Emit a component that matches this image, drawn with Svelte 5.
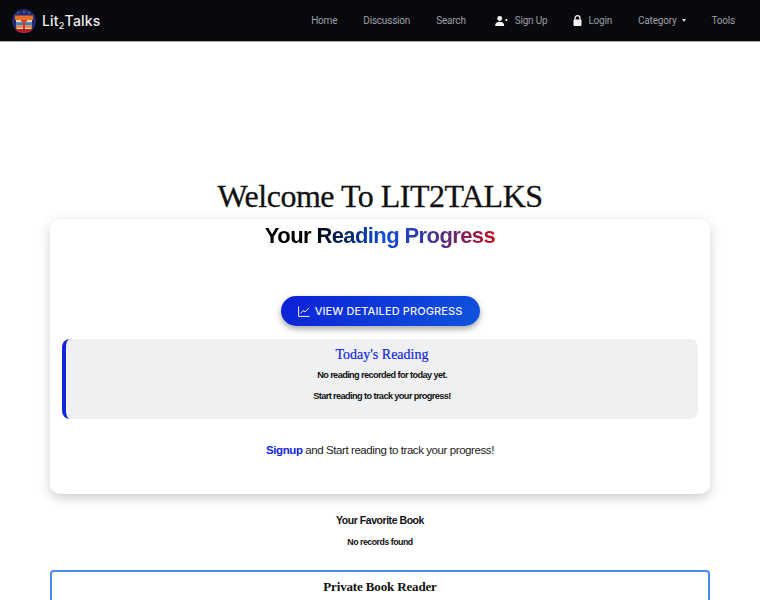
<script>
	const links = [
		{ label: 'Home' },
		{ label: 'Discussion' },
		{ label: 'Search' },
		{ label: 'Sign Up', icon: 'user' },
		{ label: 'Login', icon: 'lock' },
		{ label: 'Category', caret: true },
		{ label: 'Tools' }
	];
</script>

<nav class="navbar">
	<a class="brand" href="#top">
		<svg class="logo" viewBox="0 0 24 24" aria-hidden="true">
			<defs>
				<clipPath id="logo-clip"><circle cx="12" cy="12" r="12" /></clipPath>
			</defs>
			<g clip-path="url(#logo-clip)">
				<rect width="24" height="24" fill="#25296e" />
				<rect y="20" width="24" height="4" fill="#b3202a" />
				<circle cx="6" cy="4" r="0.8" fill="#7f8ac8" />
				<circle cx="12" cy="3" r="0.8" fill="#8f98d0" />
				<circle cx="17" cy="4" r="0.8" fill="#7f8ac8" />
				<rect x="3" y="6.500" width="18" height="4.500" fill="#e8702a" />
				<rect x="4" y="11" width="16" height="2.500" fill="#f6d8a8" />
				<rect x="4" y="13.500" width="16" height="2.500" fill="#3f7fd0" />
				<rect x="4" y="16" width="16" height="2.500" fill="#ee8a3c" />
				<rect x="4.500" y="18.500" width="15" height="1.500" fill="#f6d8a8" />
				<rect x="9" y="11" width="6" height="1.600" fill="#d8301f" />
				<rect x="11" y="11" width="2" height="9" fill="#d8301f" />
			</g>
		</svg>
		<span>Lit<sub>2</sub>Talks</span>
	</a>
	<ul class="nav-links">
		{#each links as link}
			<li>
				<a href="#top">
					{#if link.icon === 'user'}
						<svg class="icon user" viewBox="0 0 14 11" aria-hidden="true">
							<circle cx="5" cy="2.8" r="2.7" />
							<path d="M0 11c0-3.2 2-4.6 5-4.6s5 1.400 5 4.600z" />
							<circle cx="12.300" cy="4.500" r="1.200" />
						</svg>
					{:else if link.icon === 'lock'}
						<svg class="icon lock" viewBox="0 0 9 11" aria-hidden="true">
							<path d="M2 5V3.200a2.500 2.500 0 0 1 5 0V5" fill="none" stroke="currentColor" stroke-width="1.300" />
							<rect x="0.500" y="4.600" width="8" height="6.400" rx="1" />
						</svg>
					{/if}
					{link.label}
					{#if link.caret}<span class="caret"></span>{/if}
				</a>
			</li>
		{/each}
	</ul>
</nav>

<main class="page">
	<h1>Welcome To LIT2TALKS</h1>

	<section class="card">
		<h2 class="gradient-title">Your Reading Progress</h2>

		<a class="progress-btn" href="#top">
			<svg class="chart" viewBox="0 0 12 11" aria-hidden="true">
				<path d="M0.600 0.500V10.400H11.500" />
				<path d="M2.500 7.500L5 4.500L7 6L10.800 2" />
			</svg>
			View Detailed Progress
		</a>

		<div class="today">
			<h3>Today's Reading</h3>
			<p>No reading recorded for today yet.</p>
			<p>Start reading to track your progress!</p>
		</div>

		<p class="signup"><a href="#top">Signup</a> and Start reading to track your progress!</p>
	</section>

	<section class="favorite">
		<h4>Your Favorite Book</h4>
		<p>No records found</p>
	</section>

	<section class="reader">
		<h3>Private Book Reader</h3>
	</section>
</main>

<style>
	:global(html), :global(body) {
		height: 600px;
		overflow: hidden;
		background: #fff;
	}

	:global(body) {
		font-family: 'Liberation Sans', Arial, sans-serif;
		color: #111;
	}

	.navbar {
		height: 41px;
		background: #08090d;
		border-bottom: 1px solid #a9a9a9;
		display: flex;
		align-items: center;
		justify-content: space-between;
		padding: 0 12px;
	}

	.brand {
		display: flex;
		align-items: center;
		gap: 6px;
		color: #eeeeee;
		text-decoration: none;
		font-family: Inter, sans-serif;
		font-size: 14px;
		font-weight: 500;
		letter-spacing: 0.2px;
	}

	.brand sub {
		font-size: 9px;
		line-height: 0;
		vertical-align: -3px;
	}

	.logo {
		width: 24px;
		height: 24px;
	}

	.nav-links {
		list-style: none;
		display: flex;
		margin: 0;
		padding: 0 13px 0 0;
		gap: 26px;
	}

	.nav-links a {
		display: flex;
		align-items: center;
		color: #9c9fa3;
		text-decoration: none;
		font-family: Roboto, sans-serif;
		font-size: 10px;
		letter-spacing: -0.200px;
	}

	.icon {
		fill: #f4f4f4;
		color: #f4f4f4;
	}

	.user {
		width: 13px;
		height: 10px;
		margin: 0 7px 0 3px;
	}

	.lock {
		width: 9px;
		height: 11px;
		margin-right: 6px;
	}

	.caret {
		width: 0;
		height: 0;
		margin-left: 5px;
		border-left: 2.500px solid transparent;
		border-right: 2.500px solid transparent;
		border-top: 3px solid #d8d8d8;
	}

	.page {
		padding: 0 50px;
	}

	h1 {
		margin: 134px 0 0;
		height: 43px;
		text-align: center;
		font-family: 'Liberation Serif', serif;
		font-weight: 400;
		font-size: 32px;
		line-height: 40px;
		letter-spacing: -0.500px;
		-webkit-text-stroke: 0.3px #111;
		color: #111;
	}

	.card {
		height: 275px;
		box-sizing: border-box;
		border-radius: 10px;
		background: #fff;
		box-shadow: 0 4px 12px rgba(0, 0, 0, 0.2);
		padding: 0 12px;
		display: flex;
		flex-direction: column;
		align-items: center;
	}

	.gradient-title {
		margin: 3px 0 0;
		font-size: 22px;
		line-height: 27px;
		font-weight: 700;
		letter-spacing: -0.600px;
		background: linear-gradient(90deg, #000 0%, #000 20%, #0f4fd8 52%, #2a3aa8 68%, #c01020 100%);
		-webkit-background-clip: text;
		background-clip: text;
		color: transparent;
	}

	.progress-btn {
		margin-top: 47px;
		height: 30px;
		width: 199px;
		box-sizing: border-box;
		border-radius: 16px;
		background: linear-gradient(135deg, #0c1fd6, #0f55dc);
		box-shadow: 0 3px 6px rgba(0, 0, 0, 0.35);
		display: flex;
		align-items: center;
		justify-content: center;
		gap: 5px;
		color: #eef1ff;
		text-decoration: none;
		text-transform: uppercase;
		font-family: Inter, sans-serif;
		font-size: 11px;
		font-weight: 500;
		letter-spacing: 0.1px;
	}

	.chart {
		width: 12px;
		height: 11px;
		fill: none;
		stroke: #eef1ff;
		stroke-width: 1;
	}

	.today {
		align-self: stretch;
		margin-top: 13px;
		height: 80px;
		box-sizing: border-box;
		background: #eff0f2;
		border-left: 4px solid #1226dc;
		border-radius: 8px;
		padding-top: 7px;
		text-align: center;
	}

	.today h3 {
		margin: 0;
		font-family: 'Liberation Serif', serif;
		font-weight: 400;
		font-size: 14px;
		line-height: 18px;
		-webkit-text-stroke: 0.2px #1226dc;
		color: #1226dc;
	}

	.today p {
		margin: 4px 0 0;
		font-size: 9.200px;
		line-height: 15px;
		font-weight: 700;
		letter-spacing: -0.600px;
		color: #111;
	}

	.today p + p {
		margin-top: 6px;
	}

	.signup {
		margin: 23px 0 0;
		font-size: 11.500px;
		line-height: 16px;
		letter-spacing: -0.420px;
		color: #222;
	}

	.signup a {
		color: #1226dc;
		font-weight: 700;
		text-decoration: none;
	}

	.favorite {
		margin-top: 19px;
		text-align: center;
	}

	.favorite h4 {
		margin: 0;
		font-size: 10.500px;
		line-height: 14px;
		font-weight: 700;
		letter-spacing: -0.450px;
	}

	.favorite p {
		margin: 8px 0 0;
		font-size: 8.800px;
		line-height: 14px;
		font-weight: 700;
		letter-spacing: -0.500px;
	}

	.reader {
		margin-top: 21px;
		height: 60px;
		box-sizing: border-box;
		border: 2px solid #4d88f0;
		border-radius: 4px;
		padding-top: 7px;
		text-align: center;
	}

	.reader h3 {
		margin: 0;
		font-family: 'Liberation Serif', serif;
		font-weight: 700;
		font-size: 13px;
		line-height: 16px;
		letter-spacing: -0.150px;
		color: #111;
	}
</style>
